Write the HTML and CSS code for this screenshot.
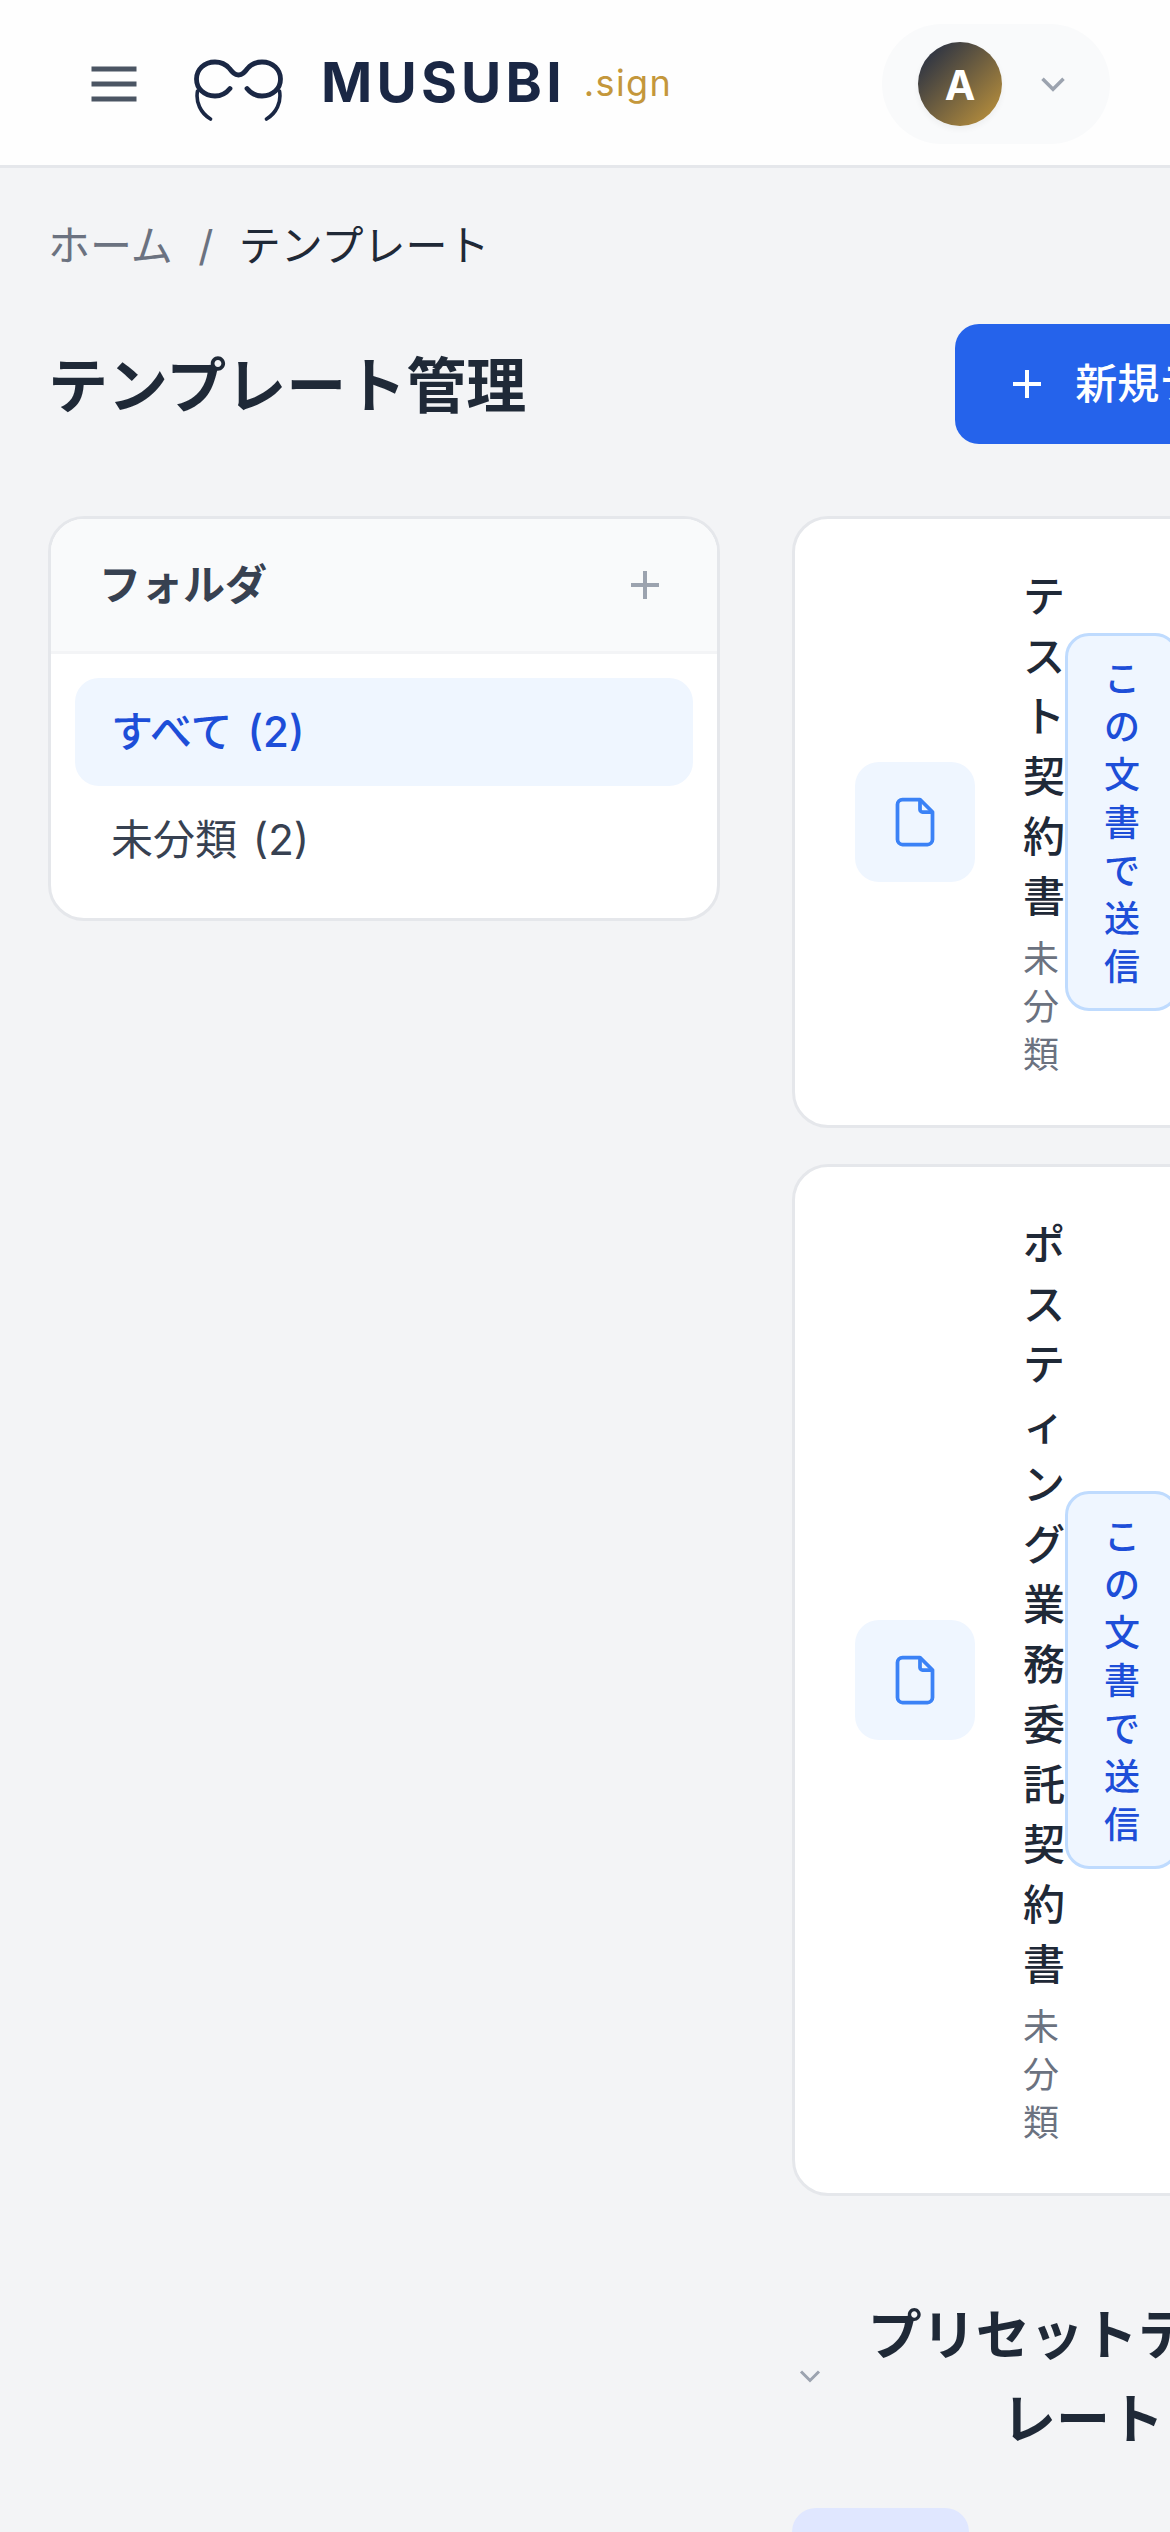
FILE: index.html
```html
<!DOCTYPE html>
<html lang="ja">
<head>
  <meta charset="UTF-8">
  <title>テンプレート管理 | MUSUBI.sign</title>
  <link rel="stylesheet" href="styles.css">
</head>
<body>

  <header>
    <div class="header-left">
      <button class="menu-btn" aria-label="メニュー">
        <svg width="60" height="60" viewBox="0 0 24 24" fill="none" stroke="currentColor" stroke-width="2"><path d="M3 6h18M3 12h18M3 18h18"/></svg>
      </button>
      <a href="#" class="logo">
        <svg class="logo-mark" width="96" height="72" viewBox="0 0 96 72" fill="none" stroke="currentColor" stroke-linecap="round">
          <path stroke-width="4.8" d="M40 38.5C36 43.5 31 46 25 46C14 46 6.500 38.500 6.500 29C6.500 19.500 14 12 25 12C31 12 36 14.500 39.500 18.500C42.500 22.500 44.500 25 48.500 25C52.500 25 54.500 22.500 57.500 18.500C61 14.500 66 12 72 12C83 12 90.500 19.500 90.500 29C90.500 38.500 83 46 72 46C66 46 61 43.500 57 38.500"/>
          <path stroke-width="3.6" d="M7.500 41C5.500 52 10.500 63 20.500 69M89.500 41C91.500 52 86.500 63 76.500 69"/>
        </svg>
        <span class="logo-name">MUSUBI</span>
        <span class="logo-sub">.sign</span>
      </a>
    </div>
    <button class="user-menu">
      <span class="avatar">A</span>
      <svg width="42" height="42" viewBox="0 0 24 24" fill="none" stroke="currentColor" stroke-width="2"><path d="M6 9l6 6 6-6"/></svg>
    </button>
  </header>

  <main>
    <nav class="breadcrumb">
      <a href="#">ホーム</a>
      <span class="slash">/</span>
      <span class="current">テンプレート</span>
    </nav>

    <div class="title-row">
      <h1>テンプレート管理</h1>
      <button class="btn-primary">
        <svg width="48" height="48" viewBox="0 0 24 24" fill="none" stroke="currentColor" stroke-width="2"><path d="M12 5v14M5 12h14"/></svg>
        新規テンプレート
      </button>
    </div>

    <div class="columns">
      <aside class="folders">
        <div class="folders-head">
          <h2>フォルダ</h2>
          <svg width="48" height="48" viewBox="0 0 24 24" fill="none" stroke="currentColor" stroke-width="2"><path d="M12 5v14M5 12h14"/></svg>
        </div>
        <ul>
          <li class="active">すべて (2)</li>
          <li>未分類 (2)</li>
        </ul>
      </aside>

      <section class="content">
        <div class="template-card">
          <div class="file-icon">
            <svg width="60" height="60" viewBox="0 0 24 24" fill="none" stroke="currentColor" stroke-width="1.5" stroke-linejoin="round"><path d="M14 3v4a1 1 0 0 0 1 1h4"/><path d="M17 21H7a2 2 0 0 1-2-2V5a2 2 0 0 1 2-2h7l5 5v11a2 2 0 0 1-2 2z"/></svg>
          </div>
          <div class="template-info">
            <h3>テスト契約書</h3>
            <p>未分類</p>
          </div>
          <button class="btn-send">この文書で送信</button>
        </div>

        <div class="template-card">
          <div class="file-icon">
            <svg width="60" height="60" viewBox="0 0 24 24" fill="none" stroke="currentColor" stroke-width="1.5" stroke-linejoin="round"><path d="M14 3v4a1 1 0 0 0 1 1h4"/><path d="M17 21H7a2 2 0 0 1-2-2V5a2 2 0 0 1 2-2h7l5 5v11a2 2 0 0 1-2 2z"/></svg>
          </div>
          <div class="template-info">
            <h3>ポスティング業務委託契約書</h3>
            <p>未分類</p>
          </div>
          <button class="btn-send">この文書で送信</button>
        </div>

        <button class="preset-toggle">
          <svg width="36" height="36" viewBox="0 0 24 24" fill="none" stroke="currentColor" stroke-width="2"><path d="M6 9l6 6 6-6"/></svg>
          <span>プリセットテンプレート</span>
        </button>
        <div class="preset-tab"></div>
      </section>
    </div>
  </main>

</body>
</html>
```

FILE: styles.css
```css
* {
  margin: 0;
  padding: 0;
  box-sizing: border-box;
}

html, body {
  height: 2532px;
  overflow: hidden;
}

body {
  font-family: Inter, 'Noto Sans CJK JP', sans-serif;
  font-size: 42px;
  line-height: 60px;
  color: #1f2937;
  background: #f3f4f6;
}

button {
  font: inherit;
  border: none;
  background: none;
  cursor: pointer;
}

a {
  color: inherit;
  text-decoration: none;
}

svg {
  display: block;
  flex-shrink: 0;
}

header {
  display: flex;
  align-items: center;
  justify-content: space-between;
  height: 168px;
  padding: 0 60px 0 48px;
  background: #fefefe;
  border-bottom: 3px solid #e5e7eb;
}

.header-left {
  display: flex;
  align-items: center;
}

.menu-btn {
  padding: 36px;
  margin-top: 3px;
  color: #4b5563;
}

.logo {
  display: flex;
  align-items: center;
  margin-left: 10px;
  color: #1a2744;
}

.logo-mark {
  margin-top: 6px;
}

.logo-name {
  margin-left: 35px;
  margin-bottom: 2px;
  font-size: 55px;
  font-weight: 700;
  letter-spacing: 4.2px;
}

.logo-sub {
  margin-left: 18px;
  font-size: 36px;
  font-weight: 400;
  letter-spacing: 1.4px;
  color: #c4973b;
}

.user-menu {
  display: flex;
  align-items: center;
  gap: 30px;
  height: 120px;
  padding: 0 36px;
  margin-top: 3px;
  border-radius: 60px;
  background: #f9fafb;
  color: #9ca3af;
}

.avatar {
  width: 84px;
  height: 84px;
  border-radius: 50%;
  background: linear-gradient(135deg, #1a2744, #c4973b);
  box-shadow: 0 3px 6px rgba(0, 0, 0, 0.05);
  color: white;
  font-size: 41px;
  font-weight: 700;
  line-height: 86px;
  text-align: center;
}

main {
  padding: 48px;
}

.breadcrumb {
  display: flex;
  gap: 24px;
  margin-bottom: 48px;
  color: #6b7280;
}

.slash {
  width: 18px;
  text-align: center;
}

.current {
  color: #1f2937;
}

.title-row {
  display: flex;
  align-items: center;
  justify-content: space-between;
  width: 1410px;
  height: 120px;
  margin-bottom: 72px;
}

h1 {
  padding-top: 4px;
  font-size: 60px;
  font-weight: 700;
}

.btn-primary {
  display: flex;
  align-items: center;
  gap: 24px;
  height: 120px;
  padding: 0 48px;
  border-radius: 24px;
  background: #2563eb;
  color: white;
  font-weight: 500;
  white-space: nowrap;
}

.columns {
  display: flex;
  align-items: flex-start;
  gap: 72px;
}

.folders {
  flex: 0 0 672px;
  border: 3px solid #e5e7eb;
  border-radius: 36px;
  background: white;
  overflow: hidden;
}

.folders-head {
  display: flex;
  align-items: center;
  justify-content: space-between;
  height: 135px;
  padding: 0 48px;
  border-bottom: 3px solid #f3f4f6;
  background: #f9fafb;
  color: #9ca3af;
}

.folders-head h2 {
  font-size: 42px;
  font-weight: 600;
  color: #374151;
}

.folders ul {
  list-style: none;
  padding: 24px;
}

.folders li {
  padding: 24px 36px;
  border-radius: 24px;
  color: #374151;
  word-spacing: 4px;
}

.folders li.active {
  background: #eff6ff;
  color: #1d4ed8;
  font-weight: 500;
}

.content {
  flex: 0 0 507px;
}

.template-card {
  display: flex;
  align-items: center;
  padding: 48px 60px;
  margin-bottom: 36px;
  border: 3px solid #e5e7eb;
  border-radius: 36px;
  background: white;
}

.file-icon {
  flex: 0 0 120px;
  height: 120px;
  padding: 30px;
  margin-right: 48px;
  border-radius: 24px;
  background: #eff6ff;
  color: #3b82f6;
}

.template-info {
  flex: 0 0 42px;
  word-break: break-all;
  line-break: anywhere;
}

.template-info h3 {
  font-size: 42px;
  font-weight: 500;
}

.template-info p {
  width: 36px;
  margin-top: 8px;
  margin-bottom: -2px;
  font-size: 36px;
  line-height: 48px;
  color: #6b7280;
}

.btn-send {
  flex: 0 0 114px;
  padding: 19px 36px 17px;
  border: 3px solid #bfdbfe;
  border-radius: 24px;
  background: #eff6ff;
  color: #1d4ed8;
  font-size: 36px;
  font-weight: 500;
  line-height: 48px;
  line-break: anywhere;
}

.preset-toggle {
  display: flex;
  align-items: center;
  gap: 36px;
  margin-top: 96px;
  margin-bottom: 48px;
  color: #9ca3af;
}

.preset-toggle span {
  width: 438px;
  padding-top: 2px;
  margin-bottom: -2px;
  color: #1f2937;
  font-size: 54px;
  font-weight: 700;
  line-height: 84px;
  line-break: anywhere;
}

.preset-tab {
  width: 177px;
  height: 96px;
  border-radius: 24px;
  background: #e0e7ff;
}
```
